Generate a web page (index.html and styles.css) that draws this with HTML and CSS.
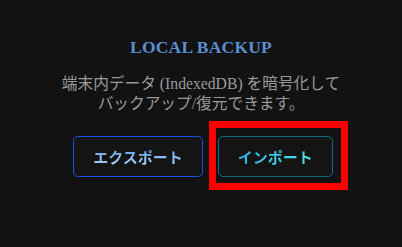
FILE: index.html
```html
<!DOCTYPE html>
<html lang="ja">
<head>
  <meta charset="UTF-8">
  <meta name="viewport" content="width=device-width, initial-scale=1.0">
  <title>Local Backup</title>
  <link rel="stylesheet" href="styles.css">
</head>
<body>
  <div class="backup">
    <h2 class="title">LOCAL BACKUP</h2>
    <p class="desc">端末内データ (IndexedDB) を暗号化して<br>バックアップ/復元できます。</p>
    <div class="actions">
      <button class="btn export"><span class="label">エクスポート</span></button>
      <div class="marked">
        <button class="btn import"><span class="label">インポート</span></button>
      </div>
    </div>
  </div>
</body>
</html>
```

FILE: styles.css
```css
html, body {
  height: 100%;
}
body {
  margin: 0;
  background: #121212;
  font-family: "Liberation Serif", "Noto Sans CJK JP", serif;
}
.backup {
  display: flex;
  flex-direction: column;
  align-items: center;
  box-sizing: border-box;
  min-height: 100%;
  padding: 36px 0 56px;
}
.title {
  margin: 0;
  font-size: 17.5px;
  font-weight: bold;
  letter-spacing: 0.2px;
  color: #5b8fd2;
  line-height: 22px;
}
.desc {
  margin: 16px 0 0;
  font-size: 15.7px;
  line-height: 20px;
  text-align: center;
  color: #9a9a9a;
}
.actions {
  display: flex;
  gap: 15px;
  margin-top: 22px;
  margin-left: 4px;
}
/* annotation box around the import button */
.marked {
  display: flex;
  border: 7px solid #ff0000;
  padding: 8px 8px 6px 2px;
  margin: -15px -15px -13px -9px;
}
.btn {
  height: 41px;
  padding: 0 19px;
  background: #141414;
  border: 1px solid;
  border-radius: 5px;
  font-family: "Noto Sans CJK JP", sans-serif;
  font-size: 15px;
  font-weight: bold;
}
.btn .label {
  -webkit-background-clip: text;
  background-clip: text;
  color: transparent;
}
.export {
  border-color: #1d4fe0;
}
.export .label {
  background-image: linear-gradient(180deg, #5a9ae8, #b0d8f6);
}
.import {
  border-color: #0f6b82;
}
.import .label {
  background-image: linear-gradient(90deg, #2ab8f0, #4ee0e0);
}
```
